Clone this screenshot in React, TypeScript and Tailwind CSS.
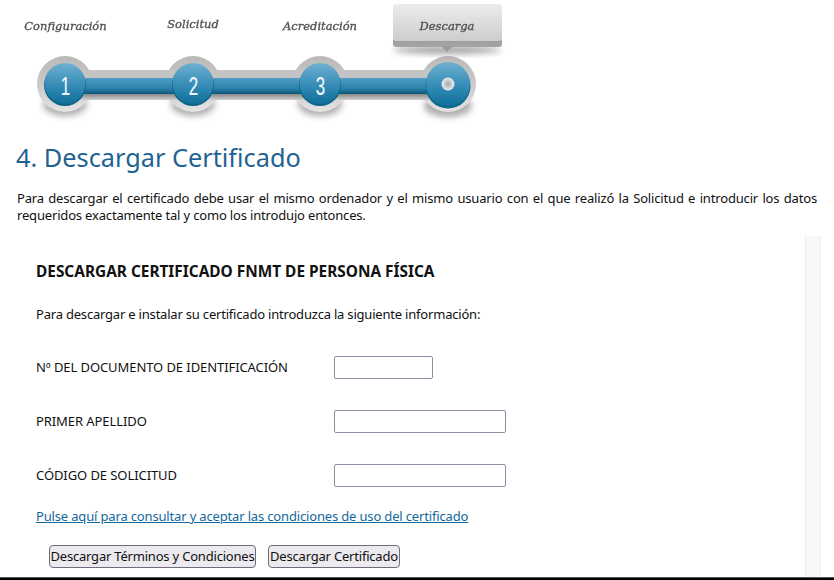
import React from "react";

const steps = [
  { x: 65, n: "1" },
  { x: 193, n: "2" },
  { x: 320, n: "3" },
];

function Stepper() {
  const serif = { fontFamily: '"DejaVu Serif", "Liberation Serif", serif', fontStyle: "italic" as const };
  return (
    <svg width="520" height="130" viewBox="0 0 520 130" className="block">
      <defs>
        <linearGradient id="bar" x1="0" y1="0" x2="0" y2="1">
          <stop offset="0" stopColor="#4f9dc3" />
          <stop offset="0.65" stopColor="#2a82ad" />
          <stop offset="1" stopColor="#0e5676" />
        </linearGradient>
        <linearGradient id="disc" x1="0" y1="0" x2="0" y2="1">
          <stop offset="0" stopColor="#6fb1d1" />
          <stop offset="0.6" stopColor="#2f88b4" />
          <stop offset="1" stopColor="#0f6f98" />
        </linearGradient>
        <linearGradient id="bubble" x1="0" y1="0" x2="0" y2="1">
          <stop offset="0" stopColor="#ececec" />
          <stop offset="1" stopColor="#cdcdcd" />
        </linearGradient>
        <linearGradient id="lip" x1="0" y1="0" x2="0" y2="1">
          <stop offset="0" stopColor="#7f7f7f" />
          <stop offset="1" stopColor="#a5a5a5" />
        </linearGradient>
        <linearGradient id="halo" x1="0" y1="0" x2="0" y2="1">
          <stop offset="0" stopColor="#b9b9b9" />
          <stop offset="0.55" stopColor="#cbcbcb" />
          <stop offset="1" stopColor="#e4e4e4" />
        </linearGradient>
        <linearGradient id="railshadow" x1="0" y1="0" x2="0" y2="1">
          <stop offset="0" stopColor="#707070" />
          <stop offset="1" stopColor="#cfcfcf" />
        </linearGradient>
        <radialGradient id="knob">
          <stop offset="0" stopColor="#9aa8b0" />
          <stop offset="0.55" stopColor="#c8d0d4" />
          <stop offset="1" stopColor="#e8ecee" />
        </radialGradient>
        <filter id="soft" x="-30%" y="-30%" width="160%" height="170%">
          <feGaussianBlur stdDeviation="3" />
        </filter>
        <filter id="blur1" x="-10%" y="-10%" width="120%" height="120%">
          <feGaussianBlur stdDeviation="0.5" />
        </filter>
        <filter id="blur2" x="-10%" y="-30%" width="120%" height="160%">
          <feGaussianBlur stdDeviation="0.25" />
        </filter>
      </defs>

      <g filter="url(#blur1)">
        {[65, 193, 320].map((x) => (
          <ellipse key={x} cx={x} cy="104" rx="22" ry="12" fill="#777" opacity="0.6" filter="url(#soft)" />
        ))}
        <ellipse cx="448" cy="106" rx="24" ry="11" fill="#777" opacity="0.6" filter="url(#soft)" />

        {[65, 193, 320, 448].map((x) => (
          <circle key={x} cx={x} cy="84" r="28" fill="url(#halo)" />
        ))}
        <rect x="65" y="70" width="380" height="12" fill="#c4c4c4" />

        <rect x="65" y="92" width="380" height="8" fill="url(#railshadow)" />

        <rect x="65" y="78" width="380" height="16" fill="url(#bar)" />

        {steps.map((s) => (
          <g key={s.n}>
            <circle cx={s.x} cy="85" r="21" fill="#0d6488" />
            <circle cx={s.x} cy="83.5" r="20.5" fill="url(#disc)" />
          </g>
        ))}
        <circle cx="448" cy="86" r="22.5" fill="#0d6a90" />
        <circle cx="448" cy="84" r="22" fill="url(#disc)" />
        <circle cx="448" cy="84" r="6.5" fill="url(#knob)" />
      </g>

      {steps.map((s) => (
        <text
          key={s.n}
          x={s.x + 0.5}
          y="95"
          textAnchor="middle"
          fill="#eef4f7"
          stroke="#eef4f7"
          strokeWidth="0.2"
          style={{ fontFamily: '"Liberation Sans", sans-serif', fontSize: 26 }}
          transform={`translate(${(s.x + 0.5) * 0.35} 0) scale(0.65 1)`}
        >
          {s.n}
        </text>
      ))}

      <ellipse cx="447" cy="50" rx="54" ry="4" fill="#666" opacity="0.6" filter="url(#soft)" />
      <rect x="393" y="8" width="109" height="39" rx="3" fill="url(#lip)" />
      <path d="M441 46 L447 52 L453 46 Z" fill="#9b9b9b" />
      <rect x="393" y="4" width="109" height="37" rx="3" fill="url(#bubble)" />

      <g fill="#4f4f4f" filter="url(#blur2)" style={{ ...serif, fontSize: 11.5 }} stroke="#4f4f4f" strokeWidth="0.3">
        <text x="65.5" y="30" textAnchor="middle">Configuración</text>
        <text x="193" y="28" textAnchor="middle">Solicitud</text>
        <text x="320" y="30" textAnchor="middle">Acreditación</text>
        <text x="447" y="30" textAnchor="middle">Descarga</text>
      </g>
    </svg>
  );
}

function Field({ label, w }: { label: string; w: string }) {
  return (
    <div className="flex items-center h-[23px] mb-[31px]">
      <label className="w-[298px] text-[13px] tracking-[-0.08px] text-[#111]">{label}</label>
      <input className={`${w} h-[23px] bg-white border border-[#8f8ba3] rounded-[2px]`} />
    </div>
  );
}

export default function App() {
  return (
    <div
      className="w-[834px] h-[580px] bg-white overflow-hidden flex flex-col relative"
      style={{ fontFamily: '"Noto Sans", "Open Sans", sans-serif' }}
    >
      <Stepper />
      <h1 className="ml-4 mt-[8px] text-[25.3px] leading-[38px] text-[#1f6393]">4. Descargar Certificado</h1>
      <p className="ml-[17px] w-[800px] mt-[14px] text-[13px] tracking-[-0.17px] leading-[17px] text-[#111] text-justify">
        Para descargar el certificado debe usar el mismo ordenador y el mismo usuario con el que realizó la Solicitud e
        introducir los datos requeridos exactamente tal y como los introdujo entonces.
      </p>
      <div className="flex mt-[12px] flex-1 min-h-0">
        <div className="w-[805px] pl-[36px] pt-[25px]">
          <h2 className="text-[15.4px] leading-[22px] font-bold text-[#111]">
            DESCARGAR CERTIFICADO FNMT DE PERSONA FÍSICA
          </h2>
          <p className="mt-[21px] text-[13px] tracking-[-0.2px] leading-[20px] text-[#111]">
            Para descargar e instalar su certificado introduzca la siguiente información:
          </p>
          <div className="mt-[32px]">
            <Field label="Nº DEL DOCUMENTO DE IDENTIFICACIÓN" w="w-[99px]" />
            <Field label="PRIMER APELLIDO" w="w-[172px]" />
            <Field label="CÓDIGO DE SOLICITUD" w="w-[172px]" />
          </div>
          <a className="block -mt-[12px] text-[13px] tracking-[-0.16px] leading-[20px] text-[#13689c] underline">
            Pulse aquí para consultar y aceptar las condiciones de uso del certificado
          </a>
          <div className="flex gap-[12px] ml-[13px] mt-[19px]">
            <button className="w-[207px] h-[23px] bg-[#eceaef] border border-[#6f6c80] rounded-[4px] text-[13px] tracking-[-0.2px] leading-none text-[#111] whitespace-nowrap">
              Descargar Términos y Condiciones
            </button>
            <button className="w-[132px] h-[23px] bg-[#eceaef] border border-[#6f6c80] rounded-[4px] text-[13px] tracking-[-0.2px] leading-none text-[#111] whitespace-nowrap">
              Descargar Certificado
            </button>
          </div>
        </div>
        <div className="w-[16px] bg-[#f8f8f8] border-x border-[#ececec]" />
      </div>
      <div className="h-[3px] bg-black border-t border-[#555] shrink-0" />
    </div>
  );
}
